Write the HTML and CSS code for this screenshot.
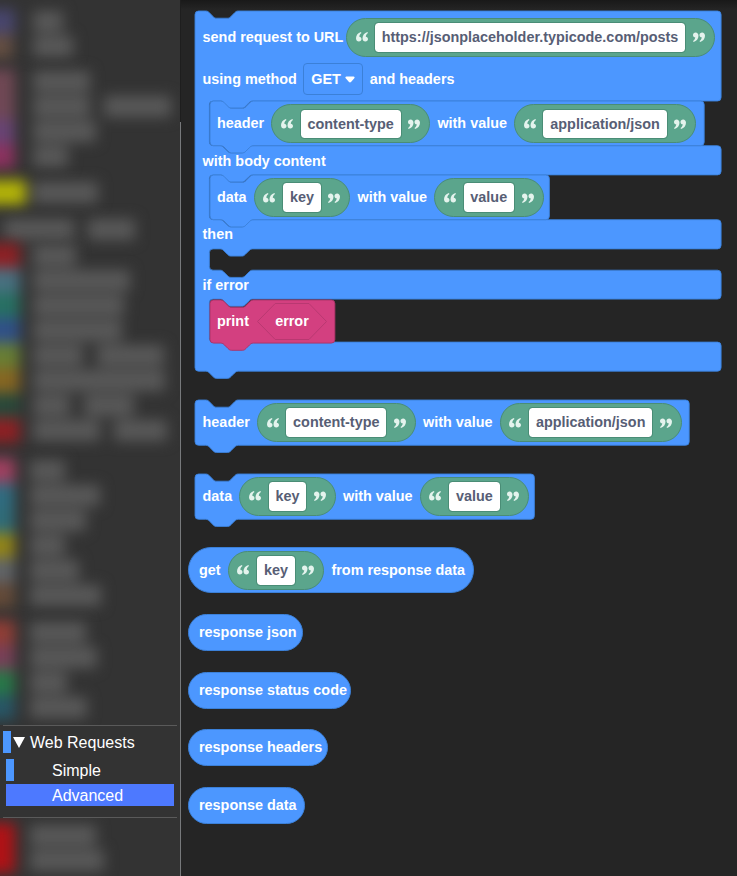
FILE: index.html
```html
<!DOCTYPE html>
<html lang="en">
<head>
<meta charset="utf-8">
<title>Web Requests blocks</title>
<link rel="stylesheet" href="styles.css">
</head>
<body>
<svg class="defs" aria-hidden="true">
  <symbol id="quote-open" viewBox="0 0 12 12">
    <path d="M4.900 1C1.900 1.900 0 4.300 0 7.300 0 9.300 1.200 10.600 2.900 10.600 4.400 10.600 5.500 9.600 5.500 8.100 5.500 6.700 4.600 5.800 3.300 5.700 3.300 4.200 4 3 5.500 1.900ZM11.400 1C8.400 1.900 6.500 4.300 6.500 7.300 6.500 9.300 7.700 10.600 9.400 10.600 10.900 10.600 12 9.600 12 8.100 12 6.700 11.100 5.800 9.800 5.700 9.800 4.200 10.500 3 12 1.900Z"/>
  </symbol>
</svg>
<div class="app">
  <aside class="toolbox">
    <div class="faded" id="upper"></div>
    <nav class="category">
      <div class="cat-head"><i class="chip"></i><svg class="tri" viewBox="0 0 12 11"><path d="M0 0H12L6 11Z"/></svg><span>Web Requests</span></div>
      <div class="cat-item"><i class="chip"></i><span>Simple</span></div>
      <div class="cat-item selected"><span>Advanced</span></div>
    </nav>
    <div class="faded lower" id="lower"></div>
  </aside>

  <main class="flyout">
    <section class="block request">
      <svg class="shape"><path d="M0 3.600A3.600 3.600 0 0 1 3.600 0H10.800c1.800 0 2.700.9 3.600 1.800l3.600 3.600c.9.9 1.800 1.800 3.600 1.800h10.800c1.800 0 2.700-.9 3.600-1.800l3.600-3.600c.9-.9 1.800-1.800 3.600-1.800H522.500a3.600 3.600 0 0 1 3.600 3.600V86.400a3.600 3.600 0 0 1-3.600 3.600H57.600c-1.800 0-2.700.9-3.600 1.800l-3.600 3.600c-.9.9-1.800 1.800-3.600 1.800h-10.800c-1.800 0-2.700-.9-3.600-1.800l-3.600-3.600c-.9-.9-1.800-1.800-3.600-1.800H18a3.600 3.600 0 0 0-3.600 3.600V131.100a3.600 3.600 0 0 0 3.600 3.600H25.200c1.800 0 2.700.9 3.600 1.800l3.600 3.600c.9.9 1.800 1.800 3.600 1.800h10.800c1.800 0 2.700-.9 3.600-1.800l3.600-3.600c.9-.9 1.800-1.800 3.600-1.800H522.500a3.600 3.600 0 0 1 3.600 3.600V160.300a3.600 3.600 0 0 1-3.600 3.600H57.600c-1.800 0-2.700.9-3.600 1.800l-3.600 3.600c-.9.9-1.800 1.800-3.600 1.800h-10.800c-1.800 0-2.700-.9-3.600-1.800l-3.600-3.600c-.9-.9-1.800-1.800-3.600-1.800H18a3.600 3.600 0 0 0-3.600 3.600V205.100a3.600 3.600 0 0 0 3.600 3.600H25.200c1.800 0 2.700.9 3.600 1.800l3.600 3.600c.9.9 1.800 1.800 3.600 1.800h10.800c1.800 0 2.700-.9 3.600-1.800l3.600-3.600c.9-.9 1.800-1.800 3.600-1.800H522.500a3.600 3.600 0 0 1 3.600 3.600V234.300a3.600 3.600 0 0 1-3.600 3.600H57.600c-1.800 0-2.700.9-3.600 1.800l-3.600 3.600c-.9.9-1.800 1.800-3.600 1.800h-10.800c-1.800 0-2.700-.9-3.600-1.800l-3.600-3.600c-.9-.9-1.800-1.800-3.600-1.800H18a3.600 3.600 0 0 0-3.600 3.600V255.600a3.600 3.600 0 0 0 3.600 3.600H25.200c1.800 0 2.700.9 3.600 1.800l3.600 3.600c.9.9 1.800 1.800 3.600 1.800h10.800c1.800 0 2.700-.9 3.600-1.800l3.600-3.600c.9-.9 1.800-1.800 3.600-1.800H522.500a3.600 3.600 0 0 1 3.600 3.600V284.500a3.600 3.600 0 0 1-3.600 3.600H57.600c-1.800 0-2.700.9-3.600 1.800l-3.600 3.600c-.9.9-1.800 1.800-3.600 1.800h-10.800c-1.800 0-2.700-.9-3.600-1.800l-3.600-3.600c-.9-.9-1.800-1.800-3.600-1.800H18a3.600 3.600 0 0 0-3.600 3.600V327.500a3.600 3.600 0 0 0 3.600 3.600H25.200c1.800 0 2.700.9 3.600 1.800l3.600 3.600c.9.9 1.800 1.800 3.600 1.800h10.800c1.800 0 2.700-.9 3.600-1.800l3.600-3.600c.9-.9 1.800-1.800 3.600-1.800H522.500a3.600 3.600 0 0 1 3.600 3.600V356.600a3.600 3.600 0 0 1-3.600 3.600H43.200c-1.800 0-2.700.9-3.600 1.800l-3.600 3.600c-.9.9-1.800 1.800-3.600 1.800h-10.800c-1.800 0-2.700-.9-3.600-1.800l-3.600-3.600c-.9-.9-1.800-1.800-3.600-1.800H3.600A3.600 3.600 0 0 1 0 356.600Z"/></svg>
      <div class="arm arm-top">
        <div class="row first"><span class="url-label">send request to URL</span><div class="pill"><svg class="q"><use href="#quote-open"/></svg><b class="field url">https://jsonplaceholder.typicode.com/posts</b><svg class="q close"><use href="#quote-open"/></svg></div></div>
        <div class="row second"><span>using method</span><div class="dropdown"><span>GET</span><svg class="caret" viewBox="0 0 10 7"><path d="M1.500.5H8.500C9.600.5 10 1.600 9.300 2.300L6 6C5.400 6.600 4.600 6.600 4 6L.7 2.300C0 1.600.4.5 1.500.5Z"/></svg></div><span>and headers</span></div>
      </div>
      <div class="slot slot-block">
        <div class="block stack">
          <svg class="shape"><path d="M0 3.600A3.600 3.600 0 0 1 3.600 0H10.800c1.800 0 2.700.9 3.600 1.800l3.600 3.600c.9.9 1.800 1.800 3.600 1.800h10.800c1.800 0 2.700-.9 3.600-1.800l3.600-3.600c.9-.9 1.800-1.800 3.600-1.800H490.600a3.600 3.600 0 0 1 3.600 3.600V41.100a3.600 3.600 0 0 1-3.600 3.600H43.200c-1.800 0-2.700.9-3.600 1.800l-3.600 3.600c-.9.9-1.800 1.800-3.600 1.800h-10.800c-1.800 0-2.700-.9-3.600-1.800l-3.600-3.600c-.9-.9-1.800-1.800-3.600-1.800H3.600A3.600 3.600 0 0 1 0 41.100Z"/></svg>
          <div class="row"><span>header</span><div class="pill"><svg class="q"><use href="#quote-open"/></svg><b class="field">content-type</b><svg class="q close"><use href="#quote-open"/></svg></div><span>with value</span><div class="pill"><svg class="q"><use href="#quote-open"/></svg><b class="field">application/json</b><svg class="q close"><use href="#quote-open"/></svg></div></div>
        </div>
      </div>
      <div class="arm"><span>with body content</span></div>
      <div class="slot slot-block">
        <div class="block stack">
          <svg class="shape"><path d="M0 3.600A3.600 3.600 0 0 1 3.600 0H10.800c1.800 0 2.700.9 3.600 1.800l3.600 3.600c.9.9 1.800 1.800 3.600 1.800h10.800c1.800 0 2.700-.9 3.600-1.800l3.600-3.600c.9-.9 1.800-1.800 3.600-1.800H335.800a3.600 3.600 0 0 1 3.600 3.600V41.100a3.600 3.600 0 0 1-3.600 3.600H43.200c-1.800 0-2.700.9-3.600 1.800l-3.600 3.600c-.9.9-1.800 1.800-3.600 1.800h-10.800c-1.800 0-2.700-.9-3.600-1.800l-3.600-3.600c-.9-.9-1.800-1.800-3.600-1.800H3.600A3.600 3.600 0 0 1 0 41.100Z"/></svg>
          <div class="row"><span>data</span><div class="pill"><svg class="q"><use href="#quote-open"/></svg><b class="field">key</b><svg class="q close"><use href="#quote-open"/></svg></div><span>with value</span><div class="pill"><svg class="q"><use href="#quote-open"/></svg><b class="field">value</b><svg class="q close"><use href="#quote-open"/></svg></div></div>
        </div>
      </div>
      <div class="arm"><span>then</span></div>
      <div class="slot slot-empty"></div>
      <div class="arm"><span>if error</span></div>
      <div class="slot slot-print">
        <div class="block stack print">
          <svg class="shape"><path d="M0 3.600A3.600 3.600 0 0 1 3.600 0H10.800c1.800 0 2.700.9 3.600 1.800l3.600 3.600c.9.9 1.800 1.800 3.600 1.800h10.800c1.800 0 2.700-.9 3.600-1.800l3.600-3.600c.9-.9 1.800-1.800 3.600-1.800H121.300a3.600 3.600 0 0 1 3.600 3.600V39.500a3.600 3.600 0 0 1-3.600 3.600H43.200c-1.800 0-2.700.9-3.600 1.800l-3.600 3.600c-.9.9-1.800 1.800-3.600 1.800h-10.800c-1.800 0-2.700-.9-3.600-1.800l-3.600-3.600c-.9-.9-1.800-1.800-3.600-1.800H3.600A3.600 3.600 0 0 1 0 39.500Z"/></svg>
          <div class="row"><span>print</span><div class="hex"><svg class="shape" viewBox="0 0 70 37"><path d="M18.200.5H52L69.500 18.500 52 36.500H18.200L.5 18.500Z"/></svg><span>error</span></div></div>
        </div>
      </div>
      <div class="arm"></div>
    </section>

    <section class="block stack solo header-block">
      <svg class="shape"><path d="M0 3.600A3.600 3.600 0 0 1 3.600 0H10.800c1.800 0 2.700.9 3.600 1.800l3.600 3.600c.9.9 1.800 1.800 3.600 1.800h10.800c1.800 0 2.700-.9 3.600-1.800l3.600-3.600c.9-.9 1.800-1.800 3.600-1.800H490.600a3.600 3.600 0 0 1 3.600 3.600V41.700a3.600 3.600 0 0 1-3.600 3.600H43.200c-1.800 0-2.700.9-3.600 1.800l-3.600 3.600c-.9.9-1.800 1.800-3.600 1.800h-10.800c-1.800 0-2.700-.9-3.600-1.800l-3.600-3.600c-.9-.9-1.800-1.800-3.600-1.800H3.600A3.600 3.600 0 0 1 0 41.700Z"/></svg>
      <div class="row"><span>header</span><div class="pill"><svg class="q"><use href="#quote-open"/></svg><b class="field">content-type</b><svg class="q close"><use href="#quote-open"/></svg></div><span>with value</span><div class="pill"><svg class="q"><use href="#quote-open"/></svg><b class="field">application/json</b><svg class="q close"><use href="#quote-open"/></svg></div></div>
    </section>

    <section class="block stack solo data-block">
      <svg class="shape"><path d="M0 3.600A3.600 3.600 0 0 1 3.600 0H10.800c1.800 0 2.700.9 3.600 1.800l3.600 3.600c.9.9 1.800 1.800 3.600 1.800h10.800c1.800 0 2.700-.9 3.600-1.800l3.600-3.600c.9-.9 1.800-1.800 3.600-1.800H335.800a3.600 3.600 0 0 1 3.600 3.600V41.700a3.600 3.600 0 0 1-3.600 3.600H43.200c-1.800 0-2.700.9-3.600 1.800l-3.600 3.600c-.9.9-1.800 1.800-3.600 1.800h-10.800c-1.800 0-2.700-.9-3.600-1.800l-3.600-3.600c-.9-.9-1.800-1.800-3.600-1.800H3.600A3.600 3.600 0 0 1 0 41.700Z"/></svg>
      <div class="row"><span>data</span><div class="pill"><svg class="q"><use href="#quote-open"/></svg><b class="field">key</b><svg class="q close"><use href="#quote-open"/></svg></div><span>with value</span><div class="pill"><svg class="q"><use href="#quote-open"/></svg><b class="field">value</b><svg class="q close"><use href="#quote-open"/></svg></div></div>
    </section>

    <section class="reporter get"><span>get</span><div class="pill"><svg class="q"><use href="#quote-open"/></svg><b class="field">key</b><svg class="q close"><use href="#quote-open"/></svg></div><span>from response data</span></section>
    <section class="reporter small json"><span>response json</span></section>
    <section class="reporter small status"><span>response status code</span></section>
    <section class="reporter small headers"><span>response headers</span></section>
    <section class="reporter small rdata"><span>response data</span></section>
  </main>
</div>
<script src="toolbox.js"></script>
</body>
</html>
```
FILE: styles.css
```css
* { box-sizing: border-box; }
body {
  margin: 0;
  width: 737px;
  height: 876px;
  overflow: hidden;
  background: #252525;
  font-family: "Liberation Sans", Arial, sans-serif;
}
.defs { position: absolute; width: 0; height: 0; }
.app { display: flex; height: 876px; }

/* toolbox */
.toolbox {
  flex: none;
  width: 181px;
  height: 876px;
  overflow: hidden;
  background: #333;
  border-right: 1px solid;
  border-image: linear-gradient(#1e1e1e 0 123px, #77797b 123px) 1;
}
.faded { height: 725px; padding-top: 8.5px; overflow: hidden; }
.faded.lower { height: 58px; padding-top: 5px; }
.group { filter: blur(7px); margin-left: -20px; }
.entry { display: flex; align-items: center; height: 25px; }
.swatch { flex: none; height: 25px; }
.bar { flex: none; height: 21px; background: #595959; }
.category {
  height: 93px;
  margin: 0 3px;
  border-top: 1px solid #5a5a5a;
  border-bottom: 1px solid #5a5a5a;
  color: #fff;
  font-size: 16px;
  line-height: 24px;
}
.cat-head { display: flex; align-items: center; height: 22px; margin-top: 5px; }
.cat-head span { padding-top: 2px; }
.chip { width: 8px; height: 22px; background: #4c97ff; }
.tri { width: 12px; height: 11px; margin: 0 5px 0 2px; fill: #fff; }
.cat-item { display: flex; height: 22px; margin: 6px 0 0 3px; }
.cat-item .chip { margin-right: 38px; }
.cat-item.selected { margin-top: 3px; margin-right: 0; padding-left: 46px; background: #4d79ff; width: 168px; }

/* flyout */
.flyout {
  flex: 1;
  height: 876px;
  padding: 11.200px 0 0 14.400px;
  background: linear-gradient(#191919, #252525 10px);
  color: #fff;
  font-size: 14.400px;
  font-weight: bold;
  line-height: 17px;
  white-space: nowrap;
}
.block { position: relative; }
.shape { position: absolute; left: 0; top: 0; width: 100%; height: 100%; overflow: visible; }
.shape path { fill: #4c97ff; stroke: #3b80d8; stroke-width: .9; }
.row { position: relative; display: flex; align-items: center; gap: 7.200px; padding-left: 7.200px; }
.request { width: 526px; height: 360.200px; }
.arm { position: relative; height: 29.200px; padding: 6.650px 0 0 7.200px; }
.arm-top { height: 90px; padding: 7px 0 0; }
.row.first { height: 38.400px; gap: 2.400px; }
.row.second { height: 31px; margin-top: 7px; gap: 6.400px; }
.slot { padding-left: 14.400px; }
.slot-block { height: 44.700px; }
.slot-empty { height: 21.400px; }
.slot-print { height: 43px; }
.stack { height: 45.300px; }
.stack > .row { height: 45.300px; gap: 7px; }
.pill {
  display: flex;
  align-items: center;
  gap: 6.700px;
  height: 38.700px;
  padding: 0 10px 0 9.800px;
  border: 1px solid #4a8d76;
  border-radius: 20px;
  background: #5ba58c;
}
.q { width: 12px; height: 12px; fill: #e4f3ed; flex: none; margin-left: -1px; }
.q.close { transform: rotate(180deg); margin: 0 -1px 0 0; }
.field {
  height: 30.500px;
  padding: 0 6.850px;
  border: 1px solid #4a8d76;
  border-radius: 4px;
  background: #fff;
  background-clip: padding-box;
  color: #575e75;
  line-height: 29px;
}
.field.url { padding: 0 6.500px; }
.dropdown {
  display: flex;
  align-items: center;
  gap: 4px;
  width: 60px;
  height: 31.500px;
  padding-left: 7px;
  border: 1px solid #3b80d8;
  border-radius: 4px;
}
.caret { width: 10px; height: 7px; fill: #fff; }
.print .shape path { fill: #d34080; stroke: #a83366; }
.print { height: 43px; }
.print > .row { height: 43px; gap: 8px; }
.hex { position: relative; width: 70px; height: 37px; text-align: center; line-height: 37px; }
.hex .shape path { stroke: #b5386f; }
.hex span { position: relative; }
.solo { height: 45.300px; }
.header-block { margin-top: 28.700px; }
.data-block { margin-top: 28.400px; }

/* reporters */
.reporter {
  display: flex;
  align-items: center;
  gap: 7px;
  margin-left: -7.400px;
  padding-left: 10px;
  border: 1px solid #3b80d8;
  background: #4c97ff;
  border-radius: 23px;
}
.get { width: 286px; height: 46px; margin-top: 28.300px; }
.small { height: 37px; margin-top: 20.700px; }
.json { width: 114.500px; }
.status { width: 163px; }
.headers { width: 139.500px; }
.rdata { width: 116.500px; }
```
FILE: toolbox.js
```js
// Each entry: [swatch colour, swatch width, first bar start, bar widths...]
const upper = [
  { gap: 0, rows: [["#48466e", 15, 33, 30], ["#644e42", 13, 33, 40]] },
  { gap: 10, rows: [["#704854", 15, 33, 57], ["#704856", 15, 33, 57, 67], ["#684474", 15, 33, 63], ["#8c325f", 15, 33, 35]] },
  { gap: 11, rows: [["#b4b408", 26, 33, 65]] },
  { gap: 12, rows: [["transparent", 0, 4, 70, 47]] },
  { gap: 1, rows: [["#8e2024", 20, 33, 43], ["#487080", 20, 33, 97], ["#277062", 20, 33, 91], ["#305088", 20, 33, 89], ["#687e34", 20, 33, 50, 67], ["#866622", 20, 33, 132], ["#28483a", 20, 33, 37, 50], ["#8e2024", 20, 33, 67, 53]] },
  { gap: 15, rows: [["#a04060", 15, 30, 35], ["#306c80", 15, 30, 70], ["#306c78", 15, 30, 56], ["#928418", 15, 30, 35], ["#606468", 15, 30, 49], ["#644a38", 15, 30, 71]] },
  { gap: 12, rows: [["#903e36", 15, 30, 56], ["#784058", 15, 30, 67], ["#287848", 15, 30, 37], ["#285666", 15, 30, 57]] }
];
const lower = [
  { gap: 0, rows: [["#b01216", 15, 30, 66], ["#b01216", 15, 30, 74]] }
];

function fill(id, groups) {
  const root = document.getElementById(id);
  for (const g of groups) {
    const box = document.createElement("div");
    box.className = "group";
    box.style.marginTop = g.gap + "px";
    for (const [color, width, start, ...bars] of g.rows) {
      const row = document.createElement("div");
      row.className = "entry";
      const swatch = document.createElement("i");
      swatch.className = "swatch";
      swatch.style.width = width + 20 + "px";
      swatch.style.background = color;
      row.append(swatch);
      bars.forEach((w, i) => {
        const bar = document.createElement("i");
        bar.className = "bar";
        bar.style.width = w + "px";
        bar.style.marginLeft = (i ? 14 : start - width) + "px";
        row.append(bar);
      });
      box.append(row);
    }
    root.append(box);
  }
}
fill("upper", upper);
fill("lower", lower);
```
